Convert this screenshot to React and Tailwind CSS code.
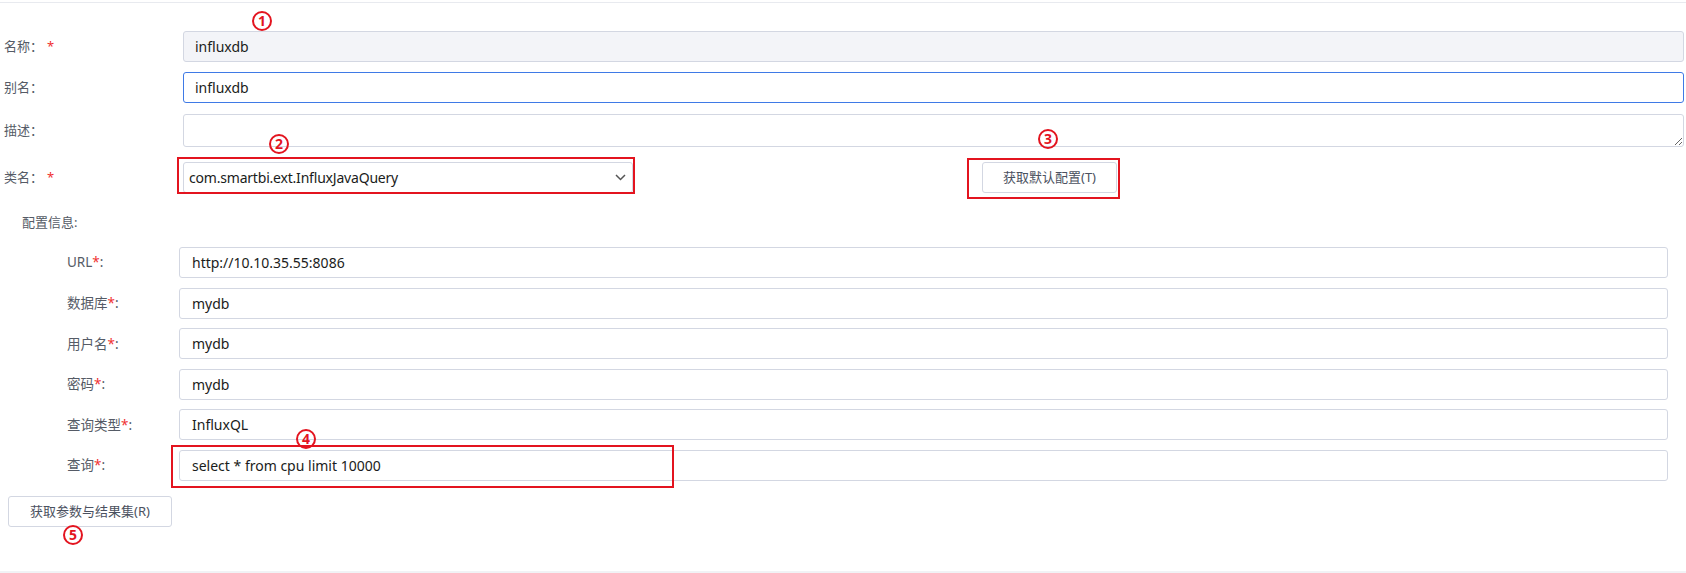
const font = { fontFamily: '"Noto Sans", "Noto Sans CJK SC", sans-serif' };

function Mark({ n, x, y }) {
  // red circled step number laid over the form
  return (
    <div
      className="absolute w-[20px] h-[20px] rounded-full border-2 border-[#e3141f] text-[#e3141f] text-[14px] font-bold flex items-center justify-center leading-none"
      style={{ left: x - 10, top: y - 10 }}
    >
      {n}
    </div>
  );
}

function Box({ x, y, w, h }) {
  return (
    <div
      className="absolute border-2 border-[#e3141f] pointer-events-none"
      style={{ left: x, top: y, width: w, height: h }}
    />
  );
}

function TopRow({ label, required, children, className = '' }) {
  return (
    <div className={`flex items-center ${className}`}>
      <div className="w-[183px] shrink-0 pl-[4px] text-[13px] text-[#555b66]">
        {label}：{required && <span className="text-[#f03030] ml-[4px]">*</span>}
      </div>
      <div className="flex-1">{children}</div>
    </div>
  );
}

function ConfigRow({ label, value }) {
  return (
    <div className="flex items-center">
      <div className="w-[179px] shrink-0 pl-[67px] text-[13.5px] text-[#555b66]">
        {label}
        <span className="text-[#f03030]">*</span>:
      </div>
      <div className="flex-1 h-[31px] border border-[#d3d7e2] rounded-[3px] bg-white flex items-center pl-[12px] text-[14px] text-[#1a1c20]">
        {value}
      </div>
    </div>
  );
}

export default function App() {
  return (
    <div className="relative w-[1686px] h-[573px] bg-white overflow-hidden flex flex-col" style={font}>
      <div className="mt-[2px] border-t border-[#e8eaef]" />

      <div className="pt-[28px] pr-[2px]">
        <TopRow label="名称" required>
          <div className="h-[31px] border border-[#d3d7e2] rounded-[3px] bg-[#f3f4f8] flex items-center pl-[11px] text-[14px] text-[#1a1c20]">
            influxdb
          </div>
        </TopRow>
        <TopRow label="别名" className="mt-[10px]">
          <div className="h-[31px] border border-[#3f7ae6] rounded-[3px] bg-white flex items-center pl-[11px] text-[14px] text-[#1a1c20]">
            influxdb
          </div>
        </TopRow>
        <TopRow label="描述" className="mt-[11px]">
          <textarea
            className="block w-full h-[33px] border border-[#d3d7e2] rounded-[3px] bg-white outline-none resize-y"
            defaultValue=""
          />
        </TopRow>
        <div className="flex items-center mt-[15px]">
          <div className="w-[183px] shrink-0 pl-[4px] text-[13px] text-[#555b66]">
            类名：<span className="text-[#f03030] ml-[4px]">*</span>
          </div>
          <div className="w-[450px] h-[31px] border border-[#d3d7e2] rounded-[3px] bg-white flex items-center justify-between pl-[5px] pr-[6px] text-[14px] text-[#1a1c20]">
            <span className="tracking-[-0.2px]">com.smartbi.ext.InfluxJavaQuery</span>
            <svg width="11" height="7" viewBox="0 0 11 7" fill="none">
              <polyline points="1,1 5.5,5.5 10,1" stroke="#555" strokeWidth="1.5" />
            </svg>
          </div>
          <button className="ml-[349px] w-[135px] h-[31px] border border-[#d3d7e2] rounded-[3px] bg-white text-[13px] text-[#4b5160]">
            获取默认配置(T)
          </button>
        </div>
      </div>

      <div className="mt-[19px] pl-[22px] text-[13px] text-[#555b66] leading-[20px]">配置信息:</div>

      <div className="mt-[15px] pr-[18px] flex flex-col gap-[9.6px]">
        <ConfigRow label="URL" value="http://10.10.35.55:8086" />
        <ConfigRow label="数据库" value="mydb" />
        <ConfigRow label="用户名" value="mydb" />
        <ConfigRow label="密码" value="mydb" />
        <ConfigRow label="查询类型" value="InfluxQL" />
        <ConfigRow label="查询" value="select * from cpu limit 10000" />
      </div>

      <div className="mt-[15px] pl-[8px]">
        <button className="w-[164px] h-[31px] border border-[#d3d7e2] rounded-[3px] bg-white text-[13px] text-[#4b5160]">
          获取参数与结果集(R)
        </button>
      </div>

      <div className="mt-auto h-[2px] bg-[#f1f2f5]" />

      <Box x={177} y={157} w={458} h={37} />
      <Box x={967} y={158} w={153} h={41} />
      <Box x={171} y={445} w={503} h={43} />
      <Mark n="1" x={262} y={21} />
      <Mark n="2" x={279} y={144} />
      <Mark n="3" x={1048} y={139} />
      <Mark n="4" x={306} y={439} />
      <Mark n="5" x={73} y={535} />
    </div>
  );
}
